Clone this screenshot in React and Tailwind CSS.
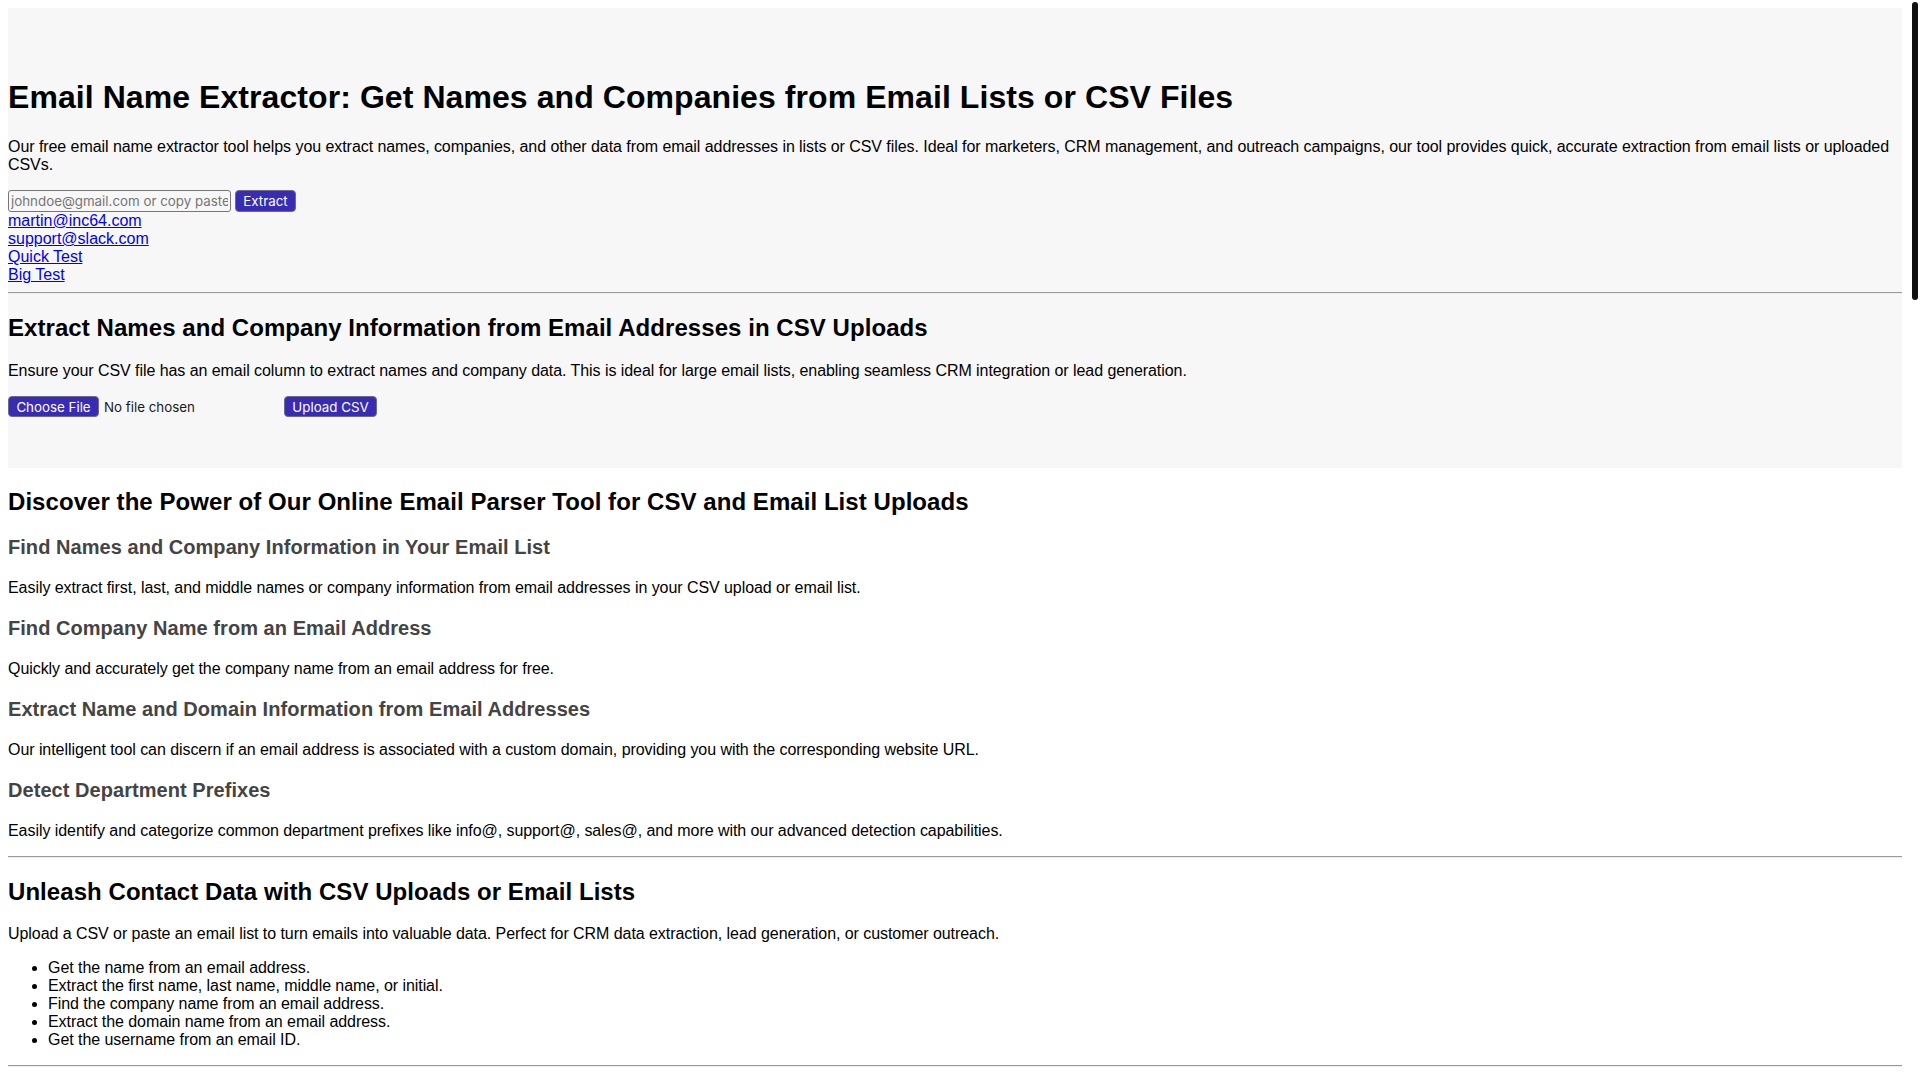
import React from "react";

const links = ["martin@inc64.com", "support@slack.com", "Quick Test", "Big Test"];

const features = [
  {
    title: "Find Names and Company Information in Your Email List",
    text: "Easily extract first, last, and middle names or company information from email addresses in your CSV upload or email list.",
  },
  {
    title: "Find Company Name from an Email Address",
    text: "Quickly and accurately get the company name from an email address for free.",
  },
  {
    title: "Extract Name and Domain Information from Email Addresses",
    text: "Our intelligent tool can discern if an email address is associated with a custom domain, providing you with the corresponding website URL.",
  },
  {
    title: "Detect Department Prefixes",
    text: "Easily identify and categorize common department prefixes like info@, support@, sales@, and more with our advanced detection capabilities.",
  },
];

const bullets = [
  "Get the name from an email address.",
  "Extract the first name, last name, middle name, or initial.",
  "Find the company name from an email address.",
  "Extract the domain name from an email address.",
  "Get the username from an email ID.",
];

const Rule = () => (
  <hr className="my-2 h-0 border-0 border-t border-b border-t-[#9a9a9a] border-b-[#eeeeee]" />
);

const App = () => {
  return (
    <div className="flex bg-white">
      <div className="flex-1 min-w-0 p-2 font-['Liberation_Sans',Arial,sans-serif] text-[16px] leading-[normal] text-black">
        <section className="bg-[#f7f7f7] py-[50px]">
          <h1 className="text-[32px] font-bold tracking-[0.07px] my-[21.44px]">
            Email Name Extractor: Get Names and Companies from Email Lists or CSV Files
          </h1>
          <p className="my-4 tracking-[-0.06px]">
            Our free email name extractor tool helps you extract names, companies, and other data
            from email addresses in lists or CSV files. Ideal for marketers, CRM management, and
            outreach campaigns, our tool provides quick, accurate extraction from email lists or
            uploaded CSVs.
          </p>
          <form className="flex items-center gap-1 h-[22px] font-['Inter',sans-serif] text-[13.33px]">
            <input
              type="text"
              placeholder="johndoe@gmail.com or copy paste"
              className="w-[223px] h-[22px] px-[2px] border border-[#767676] rounded-[3px] bg-transparent placeholder:text-[#757575] outline-none"
            />
            <button
              type="button"
              className="h-[22px] w-[61px] bg-[#382cb4] text-white border border-[#6b6b8f] rounded-[4px]"
            >
              Extract
            </button>
          </form>
          <div>
            {links.map((l) => (
              <a key={l} href="#" className="block w-fit text-[#0000ee] underline">
                {l}
              </a>
            ))}
          </div>
          <Rule />
          <h2 className="text-[24px] font-bold tracking-[0.06px] my-[19.92px]">
            Extract Names and Company Information from Email Addresses in CSV Uploads
          </h2>
          <p className="my-4 tracking-[-0.06px]">
            Ensure your CSV file has an email column to extract names and company data. This is
            ideal for large email lists, enabling seamless CRM integration or lead generation.
          </p>
          <div className="flex items-center h-[22px] font-['Inter',sans-serif] text-[13.33px]">
            <label className="flex items-center w-[276px]">
              <span className="h-[21px] w-[91px] flex items-center justify-center bg-[#382cb4] text-white border border-[#6b6b8f] rounded-[4px]">
                Choose File
              </span>
              <span className="ml-[5px] text-[#1a1a1a]">No file chosen</span>
              <input type="file" accept=".csv" className="hidden" />
            </label>
            <button
              type="button"
              className="h-[21px] w-[93px] bg-[#382cb4] text-white border border-[#6b6b8f] rounded-[4px]"
            >
              Upload CSV
            </button>
          </div>
        </section>

        <h2 className="text-[24px] font-bold tracking-[0.06px] my-[19.92px]">
          Discover the Power of Our Online Email Parser Tool for CSV and Email List Uploads
        </h2>
        {features.map((f) => (
          <div key={f.title}>
            <h3 className="text-[20px] font-bold tracking-[0.05px] text-[#444444] my-5">
              {f.title}
            </h3>
            <p className="my-4 tracking-[-0.06px]">{f.text}</p>
          </div>
        ))}
        <Rule />
        <h2 className="text-[24px] font-bold tracking-[0.06px] my-[19.92px]">
          Unleash Contact Data with CSV Uploads or Email Lists
        </h2>
        <p className="my-4 tracking-[-0.06px]">
          Upload a CSV or paste an email list to turn emails into valuable data. Perfect for CRM
          data extraction, lead generation, or customer outreach.
        </p>
        <ul className="my-4 pl-10 list-disc tracking-[-0.06px]">
          {bullets.map((b) => (
            <li key={b}>{b}</li>
          ))}
        </ul>
        <Rule />
      </div>
      {/* scrollbar track */}
      <div className="w-[10px] shrink-0 px-[2px] pt-[2px]">
        <div className="h-[298px] w-[6px] rounded-full bg-[#111111]" />
      </div>
    </div>
  );
};

export default App;
